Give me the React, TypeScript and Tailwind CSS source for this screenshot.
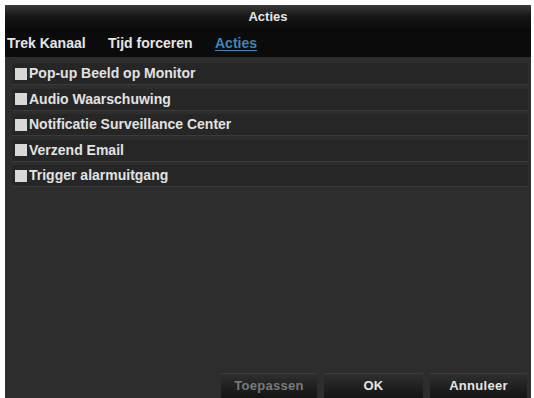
import React from 'react';

const items = [
  'Pop-up Beeld op Monitor',
  'Audio Waarschuwing',
  'Notificatie Surveillance Center',
  'Verzend Email',
  'Trigger alarmuitgang',
];

const App = () => {
  return (
    <div
      className="w-[534px] h-[398px] bg-white pl-[5px] pt-[5px] pr-[3px] overflow-hidden"
      style={{ fontFamily: '"Liberation Sans", Arial, sans-serif' }}
    >
      <div className="h-full flex flex-col bg-[#2c2c2c]">
        {/* Title */}
        <div className="h-[24px] flex items-center justify-center bg-gradient-to-b from-[#3a3a3a] via-[#151515] to-[#0c0c0c]">
          <span className="text-[13px] text-[#e8e8e8] font-bold">Acties</span>
        </div>

        {/* Tabs */}
        <div className="h-[28px] flex items-center bg-[#0b0b0b] text-[14px] font-bold pl-[2px]">
          <span className="text-[#e6e6e6] w-[101px]">Trek Kanaal</span>
          <span className="text-[#e6e6e6] w-[107px]">Tijd forceren</span>
          <span className="text-[#3f86b6] underline underline-offset-2">Acties</span>
        </div>

        {/* Rows */}
        <div className="flex-1 flex flex-col pt-[6px] pl-[7px] pr-[3px] bg-[#2d2d2d]">
          {items.map((t) => (
            <div
              key={t}
              className="h-[22px] mb-[3.5px] flex items-center gap-[2px] pl-[3px] bg-[#262626] border-b border-[#3a3a3a]"
            >
              <span className="w-[12px] h-[12px] bg-[#d8d8d8]" />
              <span className="text-[14px] font-bold text-[#e2e2e2]">{t}</span>
            </div>
          ))}
          <div className="flex-1" />
          <div className="flex justify-end gap-[7px] pr-[1px] h-[25px]">
            <button className="w-[96px] h-full bg-gradient-to-b from-[#2f2f2f] to-[#141414] text-[13px] font-bold tracking-[0.3px] text-[#7a7a7a] border-t border-[#3c3c3c]">
              Toepassen
            </button>
            <button className="w-[99px] h-full bg-gradient-to-b from-[#2f2f2f] to-[#141414] text-[13px] font-bold tracking-[0.3px] text-[#e6e6e6] border-t border-[#3c3c3c]">
              OK
            </button>
            <button className="w-[97px] h-full bg-gradient-to-b from-[#2f2f2f] to-[#141414] text-[13px] font-bold tracking-[0.3px] text-[#e6e6e6] border-t border-[#3c3c3c]">
              Annuleer
            </button>
          </div>
        </div>
      </div>
    </div>
  );
};

export default App;
